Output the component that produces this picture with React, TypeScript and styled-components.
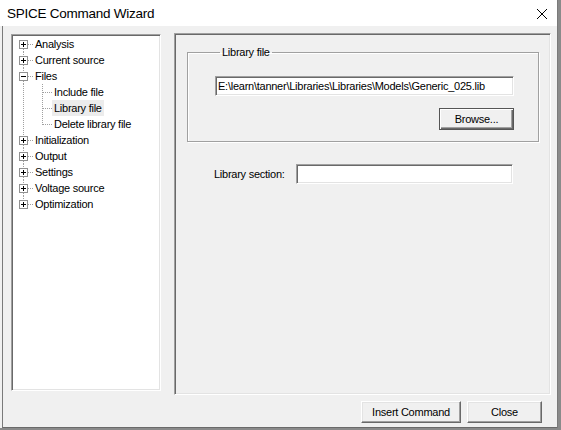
import React from "react";
import styled, { createGlobalStyle, css } from "styled-components";

const Global = createGlobalStyle`
  html, body { margin: 0; padding: 0; background: #8a8a8a; }
  body { width: 561px; height: 430px; overflow: hidden; }
  * { box-sizing: border-box; }
`;

const UI_FONT = `"Liberation Sans", Arial, sans-serif`;

const sunken = css`
  border-style: solid;
  border-width: 1px;
  border-color: #a0a0a0 #ffffff #ffffff #a0a0a0;
  box-shadow: inset 1px 1px 0 #696969, inset -1px -1px 0 #e3e3e3;
`;

const Window = styled.div`
  width: 558px;
  height: 428px;
  display: flex;
  flex-direction: column;
  background: #f0f0f0;
  border-right: 1px solid #7a7a7a;
  font-family: ${UI_FONT};
  font-size: 11px;
  letter-spacing: -0.25px;
  color: #000;
`;

const TitleBar = styled.div`
  height: 26px;
  flex: none;
  background: #ffffff;
  display: flex;
  align-items: center;
  justify-content: space-between;
  padding: 0 9px 0 7px;
`;

const Title = styled.span`
  font-family: "Liberation Sans", Arial, sans-serif;
  font-size: 13.5px;
  letter-spacing: -0.25px;
  color: #000;
  margin-top: 1px;
`;

const CloseX = styled.svg`
  width: 12px;
  height: 12px;
  margin-top: 2px;
`;

const Body = styled.div`
  flex: 1;
  margin-left: 2px;
  border-left: 1px solid #7a7a7a;
  border-bottom: 1px solid #6a6a6a;
  display: flex;
  flex-direction: column;
  padding: 0 6px 0 8px;
`;

const MainRow = styled.div`
  display: flex;
  align-items: flex-start;
  gap: 13px;
`;

const TreePanel = styled.div`
  ${sunken};
  flex: none;
  width: 150px;
  height: 357px;
  margin-top: 8px;
  background: #ffffff;
  padding: 1px 2px 2px;
`;

const TreeRow = styled.div`
  height: 16px;
  display: flex;
  align-items: center;
`;

const TreeLabel = styled.span<{ $selected?: boolean }>`
  height: 16px;
  line-height: 16px;
  padding: 0 2px;
  white-space: nowrap;
  background: ${(p) => (p.$selected ? "#ececec" : "transparent")};
`;

const Lines = styled.svg`
  flex: none;
  height: 16px;
  display: block;
`;

const RightPanel = styled.div`
  ${sunken};
  flex: none;
  width: 377px;
  height: 362px;
  margin-top: 7px;
  padding: 11px 0 0 12px;
  display: flex;
  flex-direction: column;
`;

const GroupBox = styled.fieldset`
  margin: 0;
  width: 352px;
  padding: 0 0 11px 26px;
  border: 1px solid #a0a0a0;
  box-shadow: 1px 1px 0 #ffffff, inset 1px 1px 0 #ffffff;
  display: flex;
  flex-direction: column;
  align-items: flex-end;
`;

const Legend = styled.legend`
  margin-left: 6px;
  padding: 0 2px;
  line-height: 14px;
`;

const GroupInner = styled.div`
  width: 300px;
  margin-right: 24px;
  margin-top: 17px;
  display: flex;
  flex-direction: column;
  align-items: flex-end;
  gap: 12px;
`;

const Edit = styled.div<{ $width: number }>`
  ${sunken};
  flex: none;
  width: ${(p) => p.$width}px;
  height: 20px;
  background: #ffffff;
  padding: 0 2px;
  line-height: 18px;
  white-space: nowrap;
  overflow: hidden;
`;

const Button = styled.button<{ $default?: boolean; $width: number }>`
  width: ${(p) => p.$width}px;
  height: 22px;
  padding: 0;
  margin: 0;
  font-family: ${UI_FONT};
  font-size: 11px;
  letter-spacing: -0.25px;
  color: #000;
  background: #f0f0f0;
  border-style: solid;
  border-width: 1px;
  border-color: #ffffff #696969 #696969 #ffffff;
  box-shadow: inset -1px -1px 0 #a0a0a0, inset 1px 1px 0 #e3e3e3;
  ${(p) =>
    p.$default &&
    css`
      border-color: #555555;
      box-shadow: inset 1px 1px 0 #ffffff, inset -1px -1px 0 #696969, inset -2px -2px 0 #a0a0a0;
    `}
`;

const FieldRow = styled.div`
  display: flex;
  align-items: center;
  margin-top: 22px;
  padding-left: 27px;
`;

const FieldLabel = styled.span`
  width: 82px;
`;

const ButtonRow = styled.div`
  display: flex;
  justify-content: flex-end;
  gap: 6px;
  margin-top: 6px;
  margin-right: 9px;
`;

type Node = { label: string; children?: string[]; expanded?: boolean };

const tree: Node[] = [
  { label: "Analysis" },
  { label: "Current source" },
  { label: "Files", expanded: true, children: ["Include file", "Library file", "Delete library file"] },
  { label: "Initialization" },
  { label: "Output" },
  { label: "Settings" },
  { label: "Voltage source" },
  { label: "Optimization" },
];

const DOT = "#a0a0a0";

function RootLines({ first, last, expanded }: { first: boolean; last: boolean; expanded?: boolean }) {
  return (
    <Lines width={19} viewBox="0 0 19 16">
      {!first && <line x1={9.5} y1={0} x2={9.5} y2={4} stroke={DOT} strokeDasharray="1 1" />}
      {!last && <line x1={9.5} y1={13} x2={9.5} y2={16} stroke={DOT} strokeDasharray="1 1" />}
      <line x1={14} y1={8.5} x2={19} y2={8.5} stroke={DOT} strokeDasharray="1 1" />
      <rect x={5.5} y={4.5} width={8} height={8} fill="#fff" stroke="#919191" />
      <line x1={7} y1={8.5} x2={12} y2={8.5} stroke="#000" />
      {!expanded && <line x1={9.5} y1={6} x2={9.5} y2={11} stroke="#000" />}
    </Lines>
  );
}

function ChildLines({ lastChild, rootContinues }: { lastChild: boolean; rootContinues: boolean }) {
  return (
    <Lines width={38} viewBox="0 0 38 16">
      {rootContinues && <line x1={9.5} y1={0} x2={9.5} y2={16} stroke={DOT} strokeDasharray="1 1" />}
      <line x1={28.5} y1={0} x2={28.5} y2={lastChild ? 9 : 16} stroke={DOT} strokeDasharray="1 1" />
      <line x1={29} y1={8.5} x2={38} y2={8.5} stroke={DOT} strokeDasharray="1 1" />
    </Lines>
  );
}

export default function App() {
  return (
    <>
      <Global />
      <Window>
        <TitleBar>
          <Title>SPICE Command Wizard</Title>
          <CloseX viewBox="0 0 12 12">
            <path d="M1 1 L11 11 M11 1 L1 11" stroke="#000" strokeWidth={1} fill="none" />
          </CloseX>
        </TitleBar>
        <Body>
          <MainRow>
            <TreePanel>
              {tree.map((n, i) => (
                <React.Fragment key={n.label}>
                  <TreeRow>
                    <RootLines first={i === 0} last={i === tree.length - 1} expanded={n.expanded} />
                    <TreeLabel>{n.label}</TreeLabel>
                  </TreeRow>
                  {n.expanded &&
                    n.children!.map((c, j) => (
                      <TreeRow key={c}>
                        <ChildLines lastChild={j === n.children!.length - 1} rootContinues={i < tree.length - 1} />
                        <TreeLabel $selected={c === "Library file"}>{c}</TreeLabel>
                      </TreeRow>
                    ))}
                </React.Fragment>
              ))}
            </TreePanel>
            <RightPanel>
              <GroupBox>
                <Legend>Library file</Legend>
                <GroupInner>
                  <Edit $width={299}>E:\learn\tanner\Libraries\Libraries\Models\Generic_025.lib</Edit>
                  <Button $default $width={75}>Browse...</Button>
                </GroupInner>
              </GroupBox>
              <FieldRow>
                <FieldLabel>Library section:</FieldLabel>
                <Edit $width={217} />
              </FieldRow>
            </RightPanel>
          </MainRow>
          <ButtonRow>
            <Button $width={100}>Insert Command</Button>
            <Button $width={75}>Close</Button>
          </ButtonRow>
        </Body>
      </Window>
    </>
  );
}
